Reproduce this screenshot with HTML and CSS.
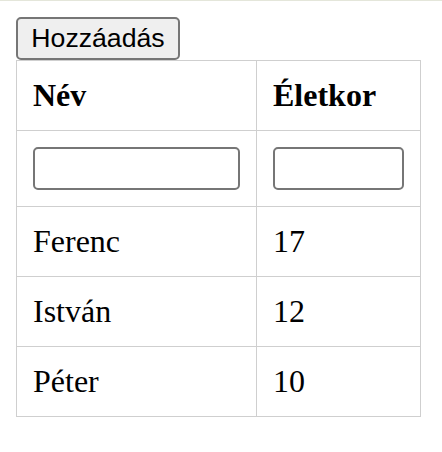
FILE: index.html
```html
<!DOCTYPE html>
<html lang="hu">
<head>
<meta charset="utf-8">
<link rel="stylesheet" href="styles.css">
</head>
<body>
<div class="topline"></div>
<div class="page">
  <button class="add-btn" type="button">Hozzáadás</button>
  <table class="people">
    <colgroup><col class="c1"><col class="c2"></colgroup>
    <thead>
      <tr><th>Név</th><th>Életkor</th></tr>
    </thead>
    <tbody>
      <tr class="input-row"><td><input type="text" class="field"></td><td><input type="text" class="field"></td></tr>
      <tr><td>Ferenc</td><td>17</td></tr>
      <tr><td>István</td><td>12</td></tr>
      <tr><td>Péter</td><td>10</td></tr>
    </tbody>
  </table>
</div>
</body>
</html>
```
FILE: styles.css
```css
html, body {
  margin: 0;
  padding: 0;
  background: #fff;
}
body {
  font-family: "Liberation Serif", "Times New Roman", serif;
  font-size: 32px;
  color: #000;
}
.topline {
  height: 1px;
  background: #e4e6da;
}
.page {
  padding: 16px;
  display: flex;
  flex-direction: column;
  align-items: flex-start;
}
.add-btn {
  display: block;
  box-sizing: border-box;
  width: 164px;
  height: 43px;
  margin: 0;
  padding: 0 12px;
  font-family: "Liberation Sans", Arial, sans-serif;
  font-size: 26.67px;
  color: #000;
  background: #efefef;
  border: 2px solid #767676;
  border-radius: 5px;
  text-align: center;
  line-height: 1;
}
.people {
  border-collapse: collapse;
  table-layout: fixed;
  width: 404px;
}
.c1 { width: 240px; }
.c2 { width: 164px; }
.people th,
.people td {
  border: 1px solid #cfcfcf;
  padding: 16px;
  text-align: left;
  vertical-align: middle;
  height: 37px;
  line-height: 37px;
}
.people th {
  font-weight: bold;
}
.input-row td {
  height: 43px;
  line-height: 1;
}
.field {
  display: block;
  box-sizing: border-box;
  width: 100%;
  height: 43px;
  margin: 0;
  padding: 2px 4px;
  border: 2px solid #767676;
  border-radius: 5px;
  background: #fff;
  font-size: 26px;
}
```
